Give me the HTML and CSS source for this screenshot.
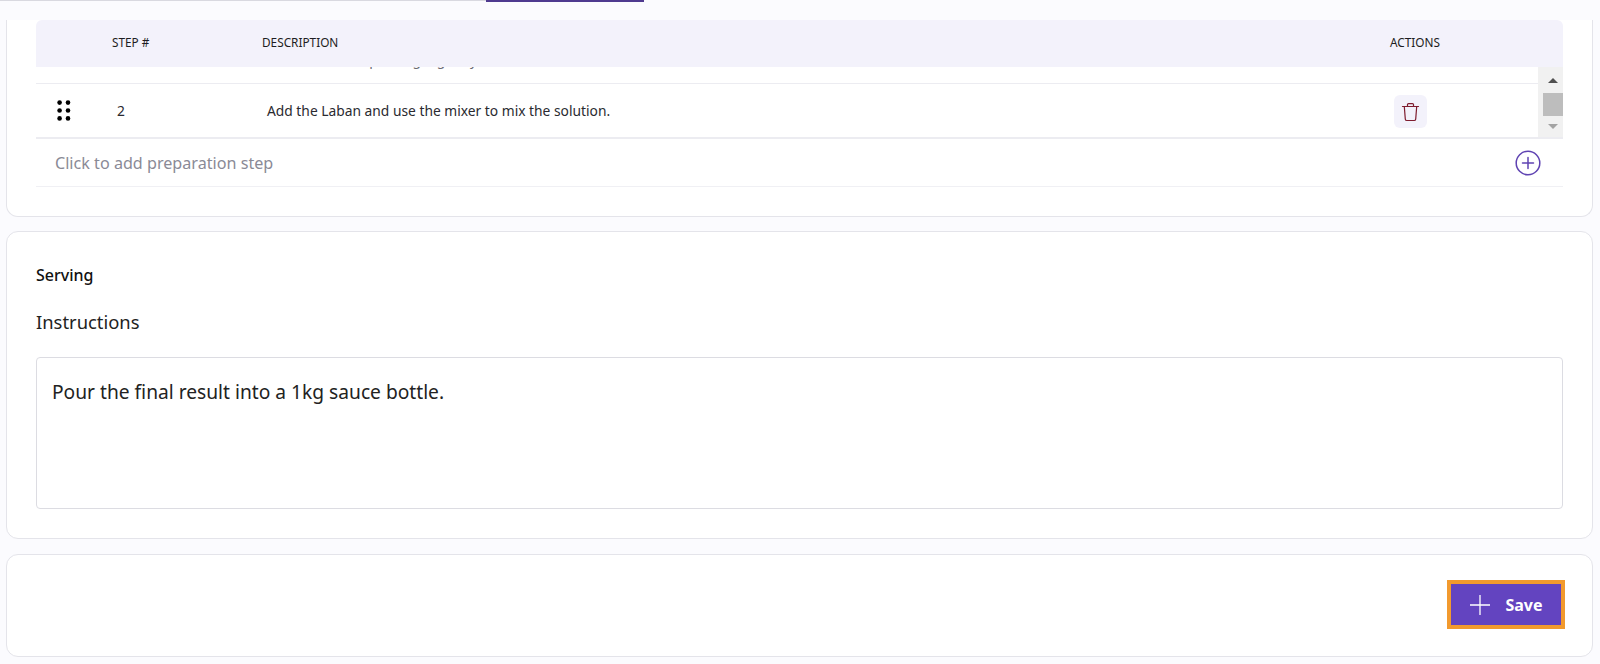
FILE: index.html
```html
<!DOCTYPE html>
<html lang="en">
<head>
<meta charset="utf-8">
<title>Recipe steps</title>
<link rel="stylesheet" href="styles.css">
</head>
<body>
<div class="tabs"><span class="tab-line"></span><span class="tab-active"></span></div>
<section class="card card-steps">
  <div class="table-head">
    <span class="th-step">STEP #</span>
    <span class="th-desc">DESCRIPTION</span>
    <span class="th-actions">ACTIONS</span>
  </div>
  <div class="table-scroll">
    <div class="rows">
      <div class="row row-clipped"><span class="cell-desc">Heat the water, pouring it gently.</span></div>
      <div class="row">
        <svg class="grip" width="14" height="21" viewBox="0 0 14 21"><g fill="#000"><circle cx="2.6" cy="2.6" r="2.3"/><circle cx="11" cy="2.6" r="2.3"/><circle cx="2.6" cy="10.5" r="2.3"/><circle cx="11" cy="10.5" r="2.3"/><circle cx="2.6" cy="18.4" r="2.3"/><circle cx="11" cy="18.4" r="2.3"/></g></svg>
        <span class="cell-step">2</span>
        <span class="cell-desc">Add the Laban and use the mixer to mix the solution.</span>
        <button class="btn-trash" type="button" aria-label="Delete">
          <svg width="19" height="20" viewBox="0 0 19 20" fill="none" stroke="#7f1d2f" stroke-width="1.2" stroke-linecap="round" stroke-linejoin="round"><path d="M1.5 4.5h16"/><path d="M6.5 4.5V2.6c0-.6.4-1 1-1h4c.6 0 1 .4 1 1v1.9"/><path d="M3.3 4.5l1 12.6c.1.8.7 1.4 1.5 1.4h7.4c.8 0 1.4-.6 1.5-1.4l1-12.6"/></svg>
        </button>
      </div>
    </div>
    <div class="scrollbar">
      <span class="arrow-up"></span>
      <span class="thumb"></span>
      <span class="arrow-down"></span>
    </div>
  </div>
  <div class="add-row">
    <span class="add-text">Click to add preparation step</span>
    <svg width="26" height="26" viewBox="0 0 26 26" fill="none" stroke="#5f43b2" stroke-width="1.5" stroke-linecap="round"><circle cx="13" cy="13" r="11.8"/><path d="M13 7.5v11M7.5 13h11"/></svg>
  </div>
</section>
<section class="card card-serving">
  <h2 class="section-title">Serving</h2>
  <label class="field-label">Instructions</label>
  <div class="textarea">Pour the final result into a 1kg sauce bottle.</div>
</section>
<section class="card card-footer">
  <button class="btn-save" type="button">
    <svg width="22" height="22" viewBox="0 0 22 22" fill="none" stroke="#fff" stroke-width="1.3"><path d="M11 1v20M1 11h20"/></svg>
    <span>Save</span>
  </button>
</section>
</body>
</html>
```
FILE: styles.css
```css
* { box-sizing: border-box; }
html, body { margin: 0; height: 664px; overflow: hidden; }
body { background: #fbfbfe; font-family: "Noto Sans", "Open Sans", sans-serif; color: #1d1d22; }
.tabs { display: flex; height: 2px; }
.tab-line { width: 486px; height: 1px; background: #d9d9e0; }
.tab-active { width: 158px; background: #4f3a8f; }
.card { margin: 0 7px 0 6px; background: #fff; border: 1px solid #e4e4ea; border-radius: 12px; }
.card-steps { height: 197px; margin-top: 18px; padding: 0 29px; border-top: 0; border-radius: 0 0 12px 12px; }
.table-head { display: flex; align-items: center; height: 47px; padding-bottom: 4px; background: #f3f2fb; border-radius: 6px 6px 0 0; font-size: 11.8px; color: #1d1d22; }
.th-step { margin-left: 76px; width: 150px; }
.th-desc { flex: 1; }
.th-actions { width: 173px; }
.table-scroll { display: flex; height: 72px; border-bottom: 2px solid #ececf1; }
.rows { flex: 1; overflow: hidden; }
.row { display: flex; align-items: center; height: 53px; font-size: 13.8px; position: relative; color: #2a2a30; }
.row-clipped { height: 17px; border-bottom: 1px solid #ececf1; align-items: flex-start; overflow: hidden; }
.row-clipped .cell-desc { margin-left: 232px; margin-top: -17px; color: #6a6a72; }
.grip { margin-left: 21px; flex: none; }
.cell-step { margin-left: 46px; width: 150px; }
.cell-desc { flex: 1; }
.btn-trash { display: flex; align-items: center; justify-content: center; width: 33px; height: 33px; margin: 2px 111px 0 0; padding: 0; border: 0; border-radius: 6px; background: #f3f2fb; }
.scrollbar { display: flex; flex-direction: column; align-items: center; width: 25px; background: #f1f1f1; padding-left: 4px; }
.arrow-up { width: 0; height: 0; margin: 11px 0 10px; border: 5px solid transparent; border-top: 0; border-bottom: 5px solid #505050; }
.thumb { width: 20px; height: 23px; background: #bdbdbd; }
.arrow-down { width: 0; height: 0; margin-top: 8px; border: 5px solid transparent; border-bottom: 0; border-top: 5px solid #a3a3a3; }
.add-row { display: flex; align-items: center; justify-content: space-between; height: 48px; padding: 0 22px 0 19px; border-bottom: 1px solid #f0f0f4; }
.add-text { font-size: 16.15px; color: #8a8a96; }
.card-serving { height: 308px; margin-top: 14px; padding: 32px 29px 0; }
.section-title { margin: 0; font-size: 16px; line-height: 22px; font-weight: 500; color: #111; }
.field-label { display: block; margin-top: 24px; font-size: 18.4px; line-height: 24px; color: #222; }
.textarea { height: 152px; margin-top: 23px; padding: 21px 15px; border: 1px solid #dcdce2; border-radius: 4px; font-size: 19.2px; line-height: 26px; color: #222; }
.card-footer { display: flex; justify-content: flex-end; align-items: center; height: 103px; margin-top: 15px; padding: 0 27px 2px 0; }
.btn-save { display: flex; align-items: center; justify-content: center; gap: 14px; width: 118px; height: 49px; padding: 0; border: 4px solid #f29a2e; border-radius: 0; background: #6344c0; color: #fff; font-family: inherit; font-size: 16px; font-weight: 700; }
```
